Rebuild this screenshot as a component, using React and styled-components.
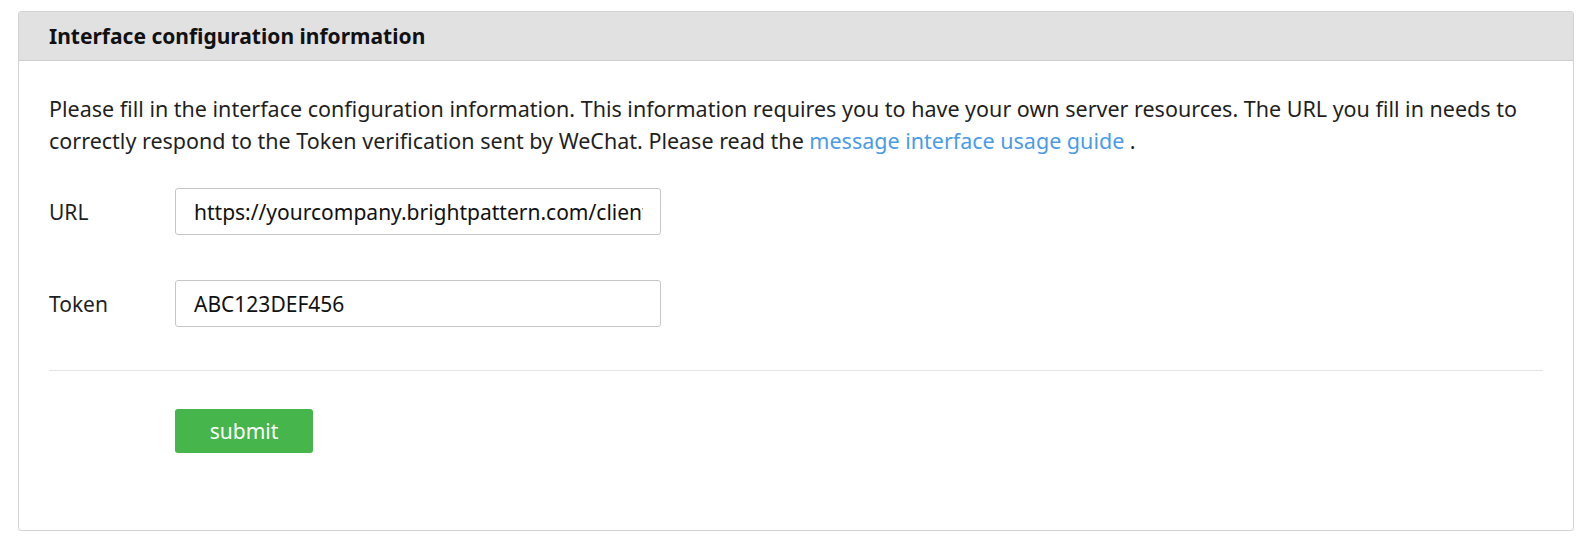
import React from 'react';
import styled, { createGlobalStyle } from 'styled-components';

const GlobalStyle = createGlobalStyle`
  html, body {
    margin: 0;
    padding: 0;
    background: #ffffff;
  }

  body {
    font-family: "Noto Sans", "Open Sans", Arial, sans-serif;
    color: #1f1f1f;
  }

  * {
    box-sizing: border-box;
  }
`;

const Page = styled.div`
  padding: 11px 19px 24px 18px;
`;

const Panel = styled.section`
  border: 1px solid #d3d3d3;
  border-radius: 3px;
  background: #ffffff;
  overflow: hidden;
`;

const PanelHeader = styled.header`
  display: flex;
  align-items: center;
  height: 49px;
  padding: 0 30px;
  background: #e1e1e1;
  border-bottom: 1px solid #cfcfcf;

  h2 {
    margin: 0;
    font-size: 21px;
    font-weight: 700;
    color: #111111;
  }
`;

const PanelBody = styled.div`
  padding: 32px 30px 77px;
`;

const Intro = styled.p`
  margin: 0 0 32px;
  font-size: 21.5px;
  line-height: 31.5px;

  a {
    color: #4a9be8;
    text-decoration: none;
  }
`;

const FormRow = styled.div`
  display: flex;
  align-items: center;
  margin-bottom: ${(p) => (p.$last ? '0' : '45px')};
`;

const Label = styled.label`
  flex: 0 0 126px;
  font-size: 21px;
  padding-top: 1px;
`;

const TextInput = styled.input`
  width: 486px;
  height: 47px;
  padding: 0 17px 0 18px;
  border: 1px solid #c6c6c6;
  border-radius: 3px;
  font-family: inherit;
  font-size: 21px;
  color: #111111;
  background: #ffffff;
  outline: none;
`;

const Divider = styled.hr`
  margin: 43px 0 38px;
  border: 0;
  border-top: 1px solid #e4e4e4;
`;

const Actions = styled.div`
  padding-left: 126px;
`;

const SubmitButton = styled.button`
  width: 138px;
  height: 44px;
  border: none;
  border-radius: 3px;
  background: #46b54b;
  color: #ffffff;
  font-family: inherit;
  font-size: 21px;
  cursor: pointer;
`;

const App = () => {
  return (
    <>
      <GlobalStyle />
      <Page>
        <Panel>
          <PanelHeader>
            <h2>Interface configuration information</h2>
          </PanelHeader>
          <PanelBody>
            <Intro>
              Please fill in the interface configuration information. This information requires you to have your own
              server resources. The URL you fill in needs to correctly respond to the Token verification sent by
              WeChat. Please read the <a href="#guide">message interface usage guide</a> .
            </Intro>
            <FormRow>
              <Label htmlFor="url">URL</Label>
              <TextInput
                id="url"
                defaultValue="https://yourcompany.brightpattern.com/clientweb/chat/wechat"
              />
            </FormRow>
            <FormRow $last>
              <Label htmlFor="token">Token</Label>
              <TextInput id="token" defaultValue="ABC123DEF456" />
            </FormRow>
            <Divider />
            <Actions>
              <SubmitButton type="button">submit</SubmitButton>
            </Actions>
          </PanelBody>
        </Panel>
      </Page>
    </>
  );
};

export default App;
